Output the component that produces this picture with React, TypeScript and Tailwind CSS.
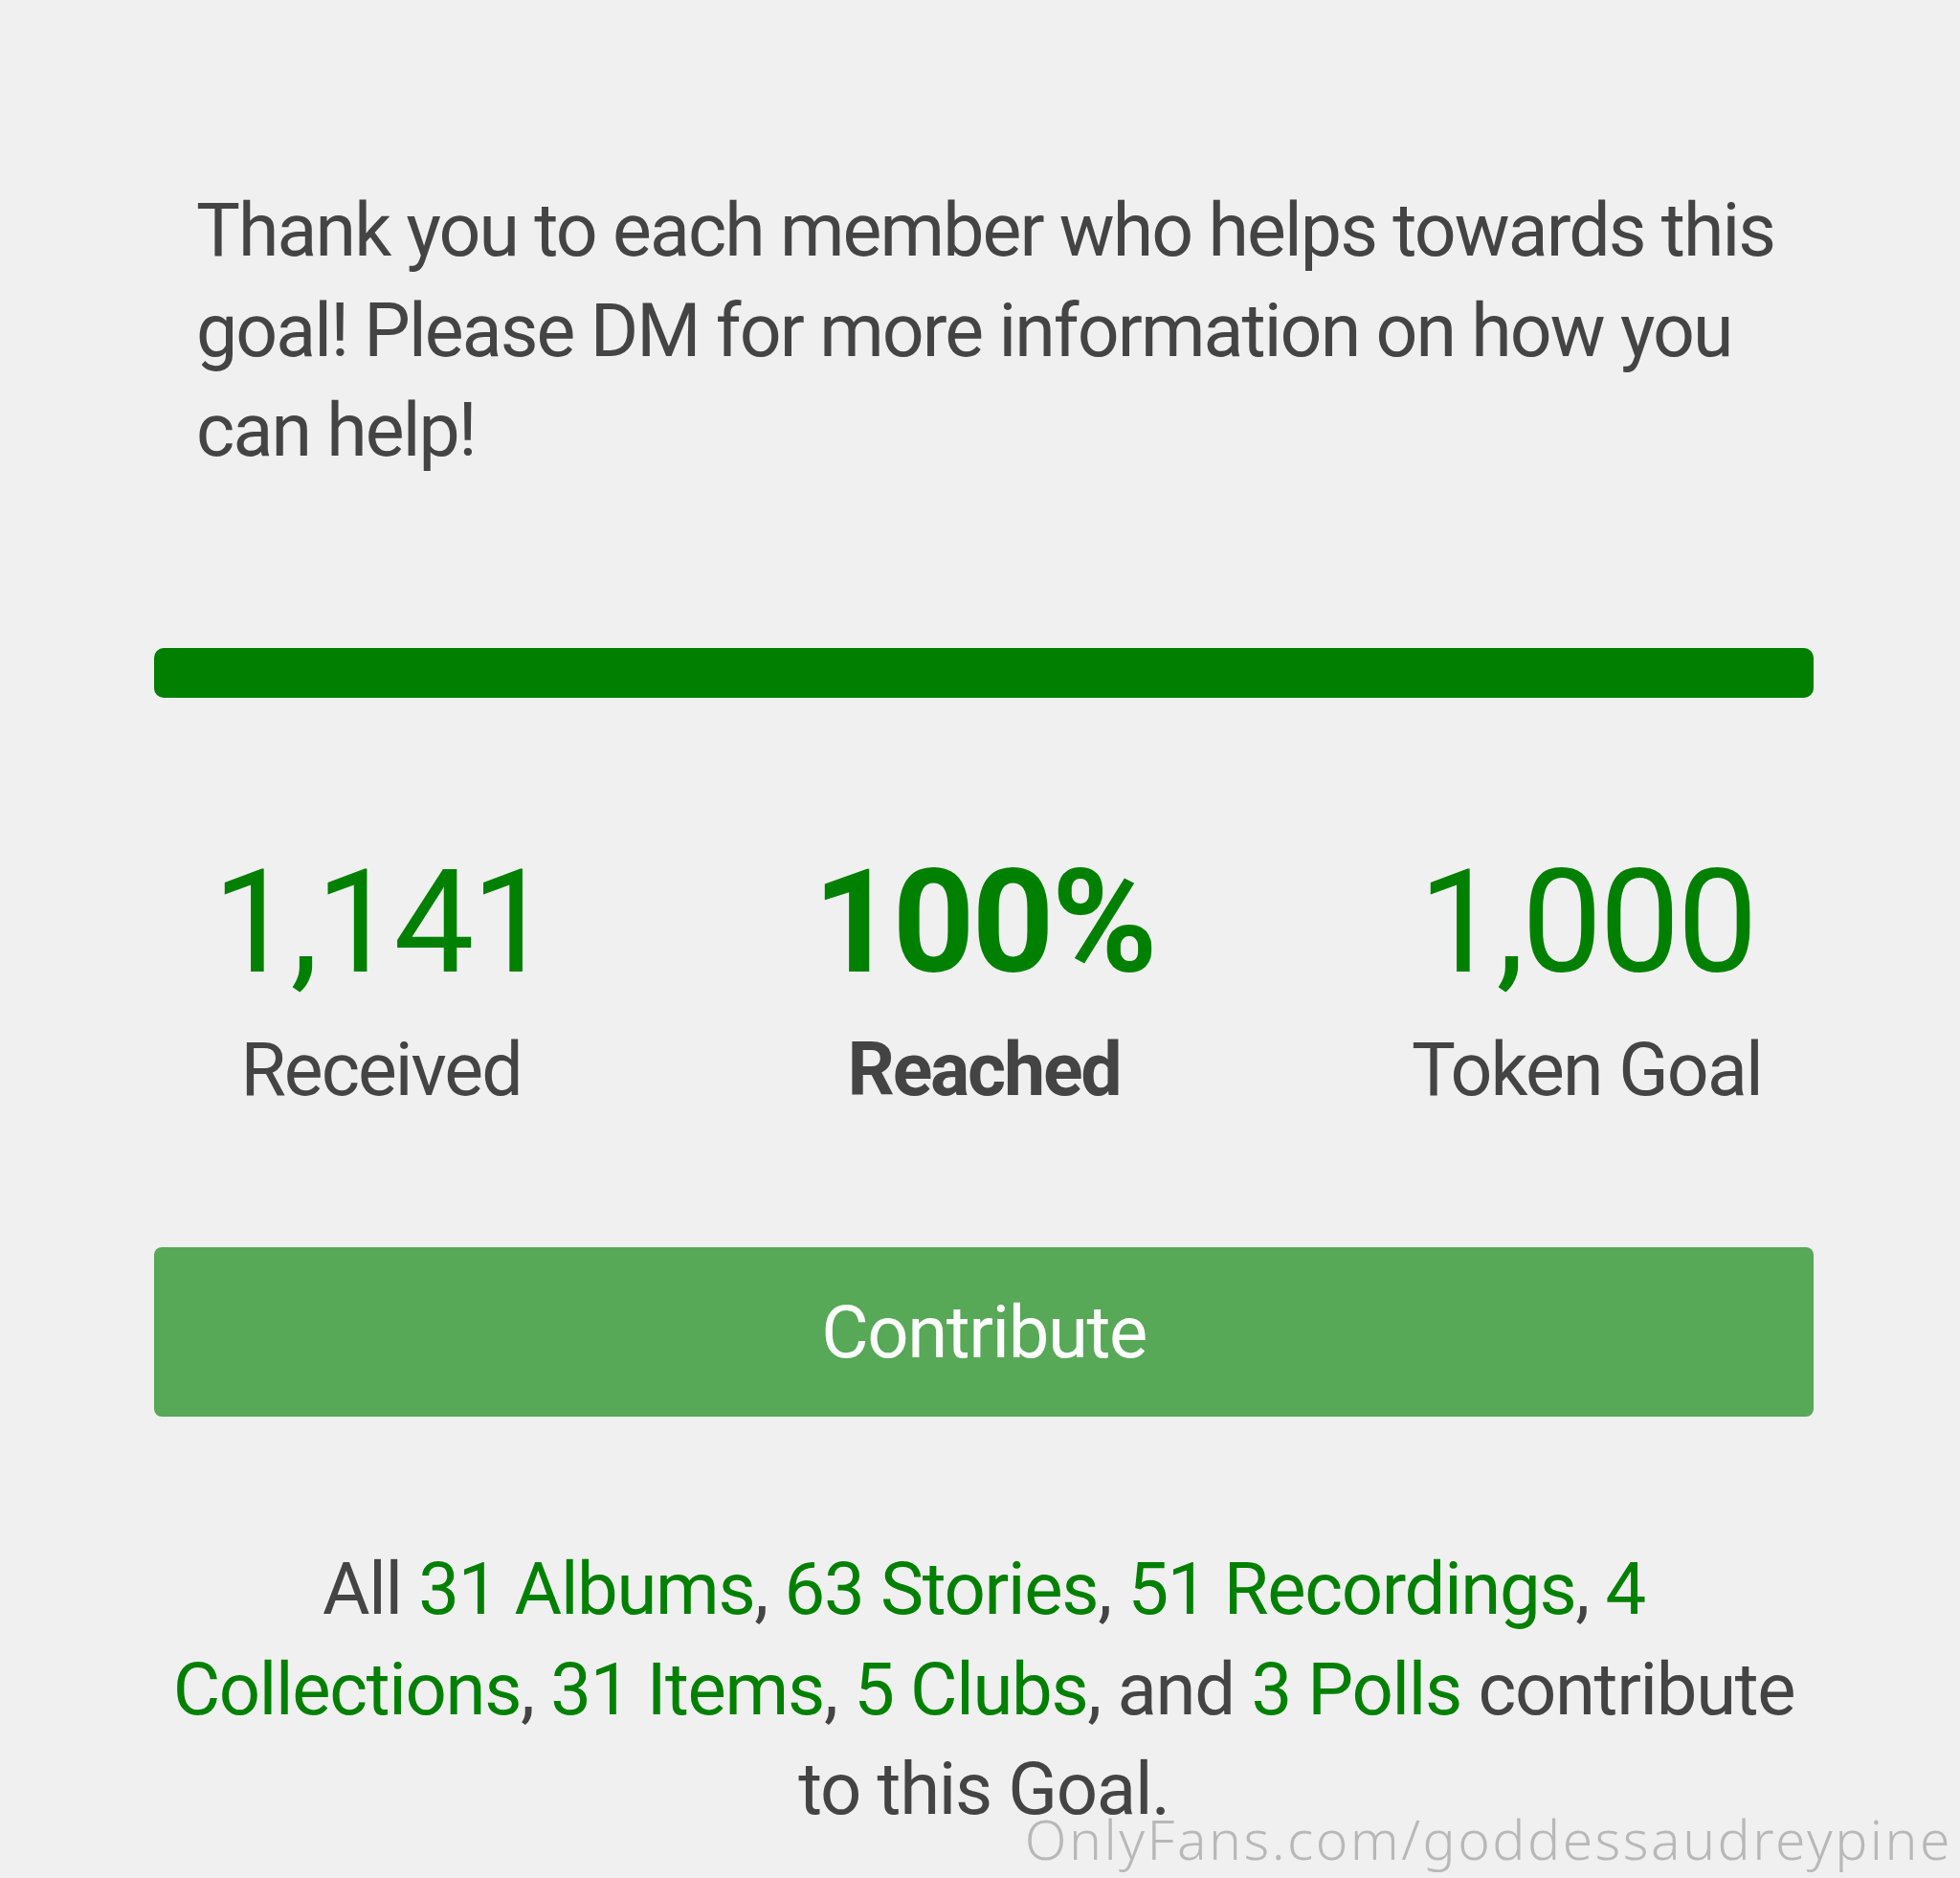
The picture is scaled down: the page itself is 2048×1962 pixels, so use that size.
import React from "react";

const G = "text-[#008000]";

export default function App() {
  return (
    <div
      className="relative w-[2048px] h-[1962px] overflow-hidden bg-[#f0f0f0] text-[#444444]"
      style={{ fontFamily: "Roboto, 'Liberation Sans', sans-serif" }}
    >
      <div className="pl-[161px] pr-[153px] pt-[189px]">
        <p className="pl-[44px] w-[1750px] text-[77px] leading-[104.5px] tracking-[-1.9px]">
          Thank you to each member who helps towards this goal! Please DM for more information on how you can help!
        </p>

        <div className="mt-[174px] h-[52px] w-full rounded-[10px] bg-[#007f00]" />

        <div className="mt-[160px] flex justify-center">
          <div className="grid grid-cols-[630px_630px_630px] shrink-0">
            <div className="flex flex-col items-center">
              <div className={`text-[150px] leading-[150px] tracking-[-3px] ${G}`}>1,141</div>
              <div className="mt-[27px] text-[77px] leading-[104.5px] tracking-[-2px]">Received</div>
            </div>
            <div className="flex flex-col items-center">
              <div className={`text-[150px] leading-[150px] tracking-[-3px] font-bold ${G}`}>100%</div>
              <div className="mt-[27px] text-[77px] leading-[104.5px] tracking-[-2.2px] font-bold">Reached</div>
            </div>
            <div className="flex flex-col items-center">
              <div className={`text-[150px] leading-[150px] tracking-[-3px] ${G}`}>1,000</div>
              <div className="mt-[27px] text-[77px] leading-[104.5px] tracking-[-1.8px]">Token Goal</div>
            </div>
          </div>
        </div>

        <button className="mt-[133px] flex h-[177px] w-full items-center justify-center rounded-[8px] bg-[#57a857] text-[76px] tracking-[-1.4px] text-white">
          Contribute
        </button>

        <p className="mt-[128px] text-center text-[76px] leading-[104.5px] tracking-[-1.3px]">
          All <span className={G}>31 Albums</span>, <span className={G}>63 Stories</span>,{" "}
          <span className={G}>51 Recordings</span>, <span className={G}>4 Collections</span>,{" "}
          <span className={G}>31 Items</span>, <span className={G}>5 Clubs</span>, and{" "}
          <span className={G}>3 Polls</span> contribute to this Goal.
        </p>
      </div>

      <div
        className="absolute right-[8px] bottom-[6px] text-[57px] leading-[70px] font-light tracking-[2.5px] text-[#b8b8b8]"
        style={{ fontFamily: "'Noto Sans', 'Open Sans', sans-serif" }}
      >
        OnlyFans.com/goddessaudreypine
      </div>
    </div>
  );
}
